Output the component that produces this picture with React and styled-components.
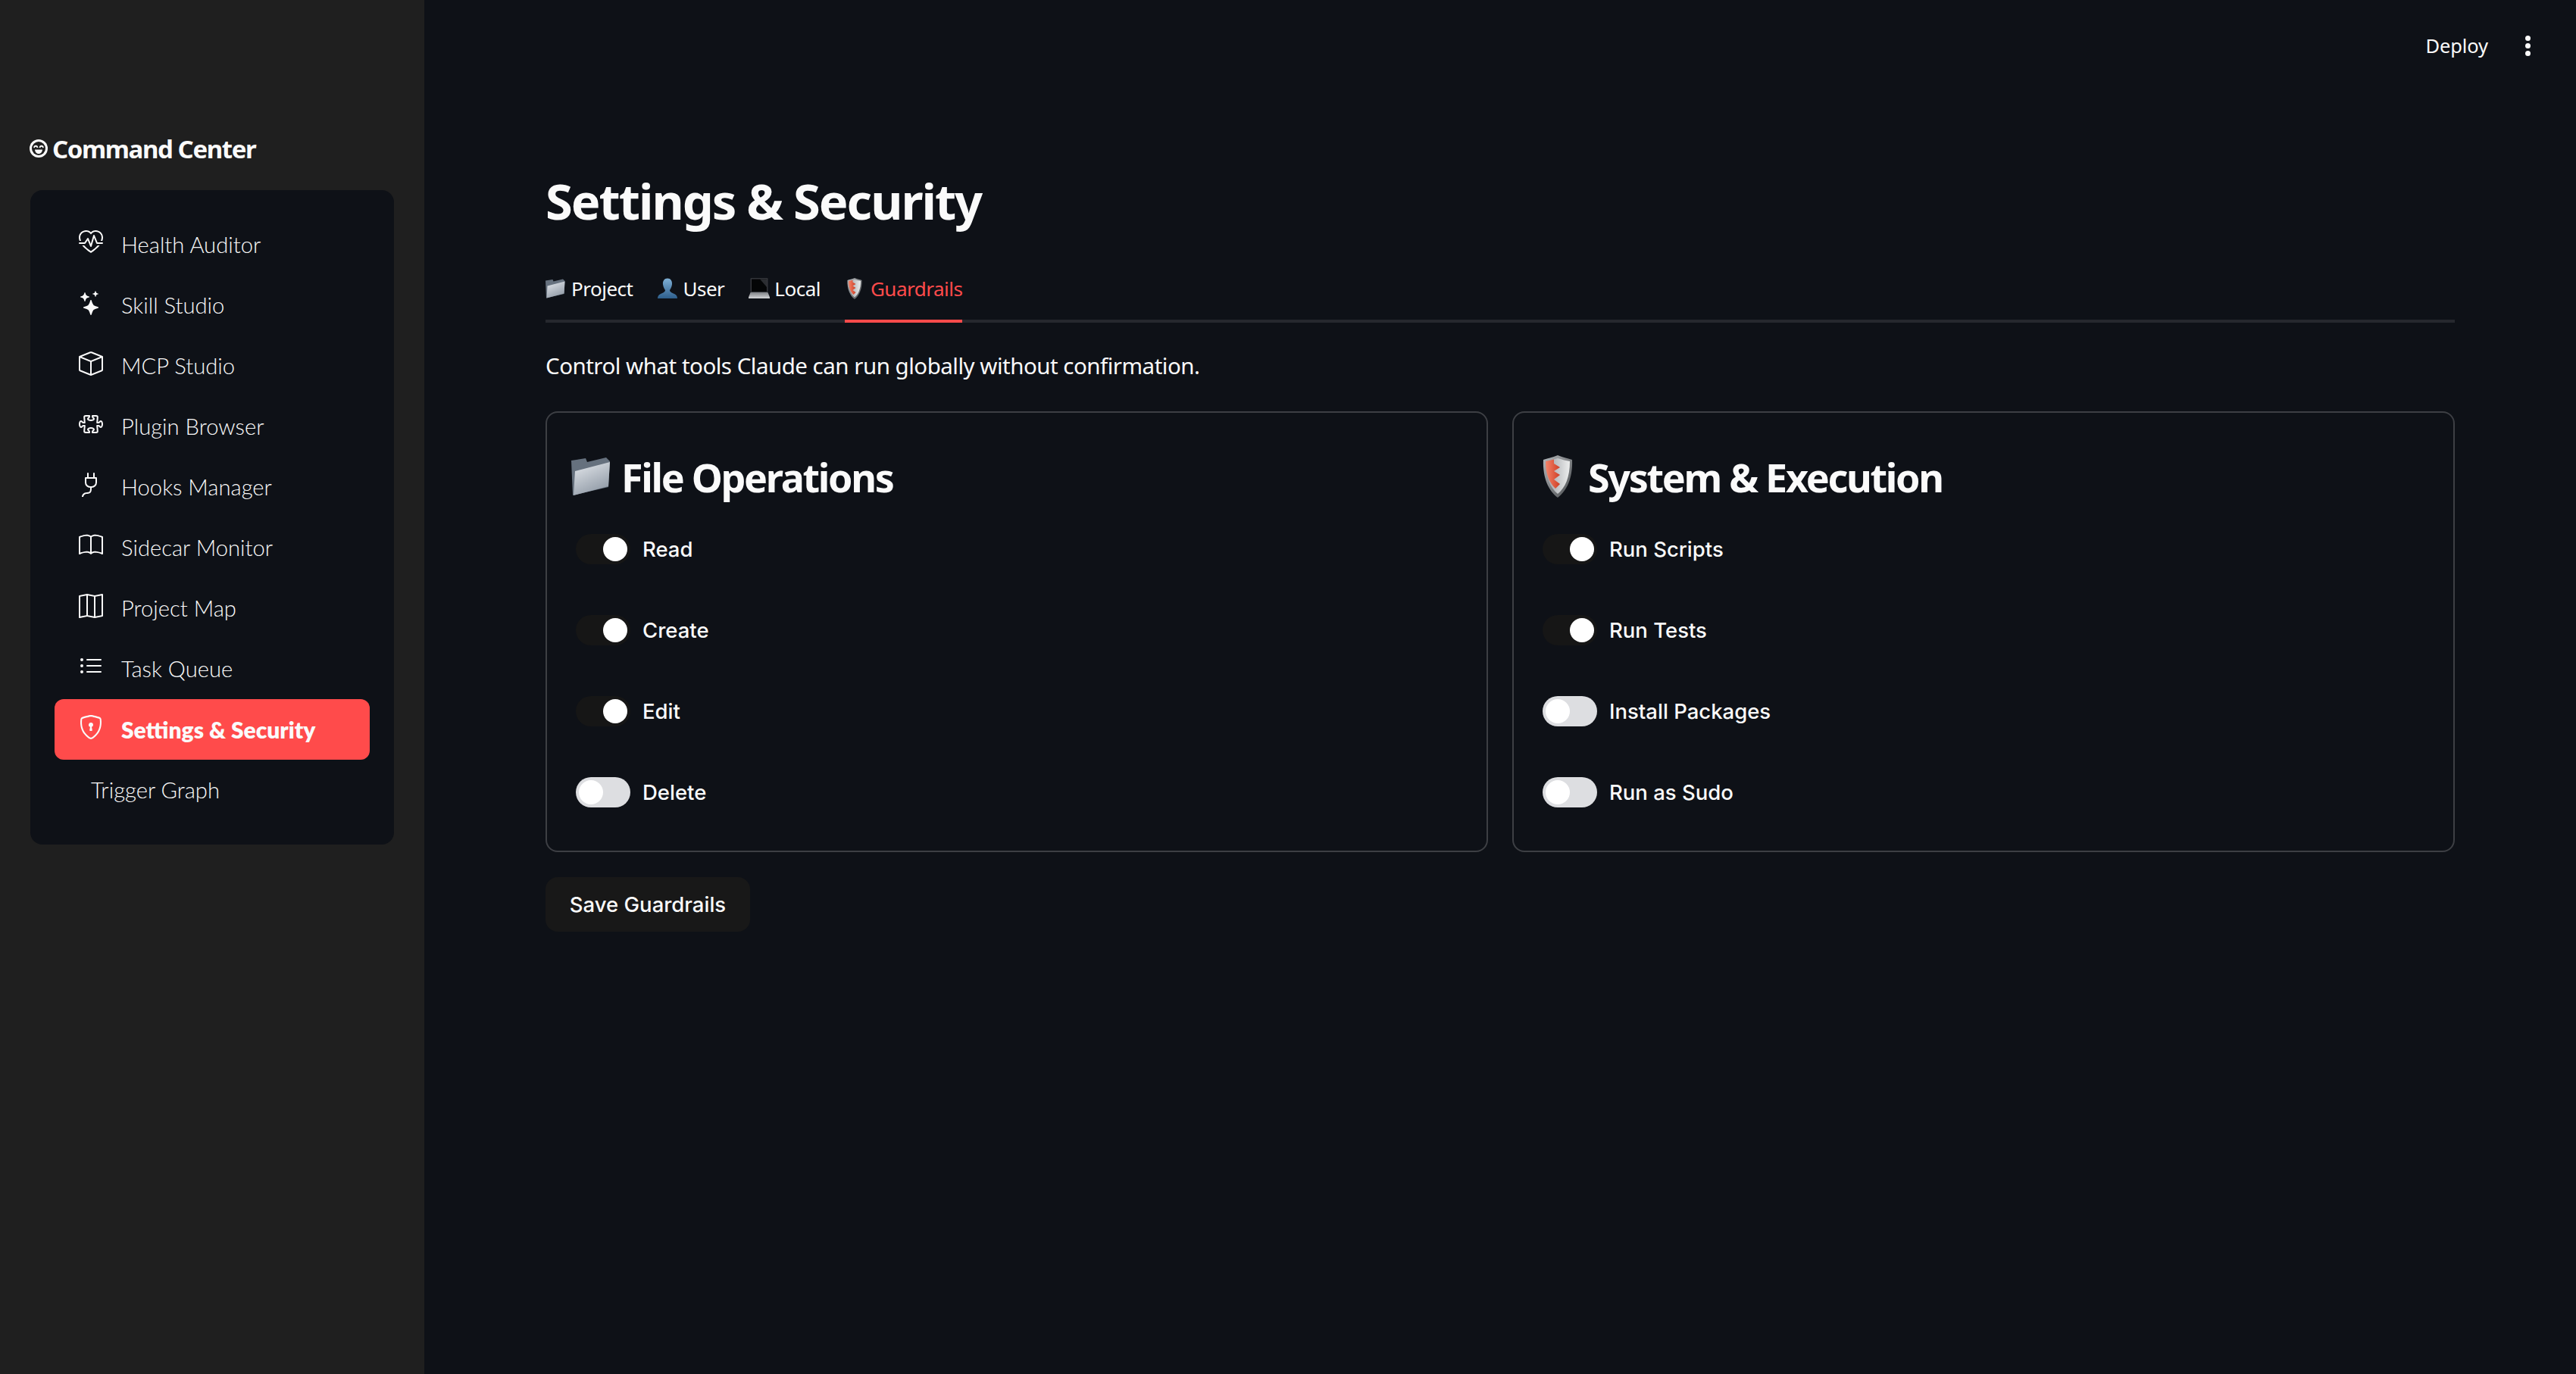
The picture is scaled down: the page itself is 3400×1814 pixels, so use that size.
import React from 'react';
import styled, { createGlobalStyle } from 'styled-components';
import {
  BsHeartPulse,
  BsStars,
  BsBox,
  BsPuzzle,
  BsPlug,
  BsBook,
  BsMap,
  BsListUl,
  BsShieldLock,
} from 'react-icons/bs';

const GlobalStyle = createGlobalStyle`
  html, body {
    margin: 0;
    padding: 0;
    background: #0e1117;
    color: #fafafa;
  }
  * {
    box-sizing: border-box;
  }
`;

const HEADING_FONT = '"Noto Sans", "Open Sans", sans-serif';
const WIDGET_FONT = 'Inter, "Liberation Sans", sans-serif';
const NAV_FONT = 'Lato, "Open Sans", sans-serif';

const Shell = styled.div`
  display: flex;
  width: 100%;
  min-height: 1814px;
`;

const Sidebar = styled.aside`
  width: 560px;
  flex-shrink: 0;
  background: #1f1f1f;
  padding: 170px 40px 0;
`;

const Brand = styled.h2`
  display: flex;
  align-items: center;
  gap: 5px;
  margin: 0 0 25px -2px;
  height: 54px;
  padding-bottom: 2px;
  font-family: ${HEADING_FONT};
  font-size: 33px;
  font-weight: 700;
  letter-spacing: -1.4px;
  color: #fafafa;
`;

const NavBox = styled.nav`
  display: flex;
  flex-direction: column;
  margin-top: 27px;
  background: #0e1117;
  border-radius: 16px;
  padding: 32px;
`;

const NavRow = styled.div`
  display: flex;
  align-items: center;
  height: 80px;
  padding-left: 32px;
  padding-bottom: 1px;
  border-radius: 12px;
  font-family: ${NAV_FONT};
  font-size: ${({ $active }) => ($active ? '30px' : '29.2px')};
  font-weight: ${({ $active }) => ($active ? 800 : 300)};
  color: #fafafa;
  background: ${({ $active }) => ($active ? '#ff4b4b' : 'transparent')};
`;

const NavIcon = styled.span`
  display: flex;
  width: ${({ $blank }) => ($blank ? '16px' : '32px')};
  margin-right: ${({ $blank }) => ($blank ? '0' : '24px')};
  margin-top: -6px;
  font-size: 32px;
`;

const Main = styled.main`
  flex: 1;
  min-width: 0;
  display: flex;
  flex-direction: column;
`;

const TopBar = styled.header`
  display: flex;
  align-items: center;
  justify-content: flex-end;
  height: 120px;
  padding-right: 60px;
`;

const DeployLabel = styled.span`
  font-family: ${HEADING_FONT};
  font-size: 25.5px;
  letter-spacing: -0.1px;
  color: #fafafa;
  margin-right: 49px;
`;

const MenuDots = styled.span`
  display: flex;
  flex-direction: column;
  gap: 3px;
`;

const Dot = styled.i`
  display: block;
  width: 7px;
  height: 7px;
  border-radius: 50%;
  background: #fafafa;
`;

const Content = styled.section`
  padding: 95px 160px 0;
`;

const PageTitle = styled.h1`
  margin: 0 0 25px;
  height: 100px;
  line-height: 100px;
  font-family: ${HEADING_FONT};
  font-size: 65px;
  font-weight: 700;
  letter-spacing: -2px;
  color: #fafafa;
`;

const TabList = styled.div`
  display: flex;
  gap: 32px;
  height: 86px;
  border-bottom: 4px solid #26282e;
`;

const Tab = styled.div`
  display: flex;
  align-items: center;
  gap: 6px;
  height: 86px;
  border-bottom: 4px solid ${({ $active }) => ($active ? '#ff4b4b' : 'transparent')};
  font-family: ${HEADING_FONT};
  font-size: 26px;
  letter-spacing: -0.5px;
  color: ${({ $active }) => ($active ? '#ff4b4b' : '#fafafa')};
`;

const Intro = styled.p`
  margin: 33px 0 36px;
  height: 48px;
  line-height: 48px;
  font-family: ${HEADING_FONT};
  font-size: 29.5px;
  letter-spacing: -0.5px;
  color: #fafafa;
`;

const CardGrid = styled.div`
  display: grid;
  grid-template-columns: 1fr 1fr;
  gap: 32px;
`;

const Card = styled.div`
  height: 582px;
  border: 2px solid #3d3f44;
  border-radius: 16px;
  padding: 50px 32px 0;
`;

const CardTitle = styled.h3`
  display: flex;
  align-items: center;
  gap: 10px;
  height: 68px;
  margin: 0 0 42px;
  font-family: ${HEADING_FONT};
  font-size: 52px;
  font-weight: 700;
  letter-spacing: -2.3px;
  color: #fafafa;
`;

const ToggleList = styled.div`
  display: flex;
  flex-direction: column;
  gap: 67px;
  padding-left: 6px;
`;

const ToggleRow = styled.label`
  display: flex;
  align-items: center;
  gap: 16px;
  height: 40px;
  font-family: ${WIDGET_FONT};
  font-size: 27.5px;
  font-weight: 500;
  color: #fafafa;
`;

const Track = styled.span`
  display: flex;
  justify-content: ${({ $on }) => ($on ? 'flex-end' : 'flex-start')};
  align-items: center;
  width: 72px;
  height: 40px;
  padding: 0 4px;
  border-radius: 20px;
  background: ${({ $on }) => ($on ? '#161616' : '#dddee1')};
`;

const Knob = styled.span`
  width: 32px;
  height: 32px;
  border-radius: 50%;
  background: #ffffff;
`;

const SaveButton = styled.button`
  display: block;
  width: 270px;
  height: 72px;
  margin-top: 33px;
  padding: 0;
  border: none;
  border-radius: 16px;
  background: #181818;
  font-family: ${WIDGET_FONT};
  font-size: 27.5px;
  font-weight: 500;
  color: #fafafa;
`;

const EmojiSvg = styled.svg`
  display: block;
  flex-shrink: 0;
  width: ${({ $size }) => $size}px;
  height: ${({ $size }) => $size}px;
`;

const LogoSvg = styled.svg`
  display: block;
  width: 26px;
  height: 26px;
`;

const FolderEmoji = ({ size }) => (
  <EmojiSvg $size={size} viewBox="0 0 56 56">
    <defs>
      <linearGradient id="folderFront" x1="0.2" y1="0" x2="0.7" y2="1">
        <stop offset="0" stopColor="#dfe3e8" />
        <stop offset="1" stopColor="#8d97a3" />
      </linearGradient>
    </defs>
    <path d="M0 7 L19 4 L21 9 L46 3 L51 8 L49 42 L2 53 Z" fill="#66717e" />
    <path d="M5 21 L51 9 L49 41 L3 53 Z" fill="url(#folderFront)" />
  </EmojiSvg>
);

const ShieldEmoji = ({ size }) => (
  <EmojiSvg $size={size} viewBox="0 0 56 56">
    <defs>
      <linearGradient id="shieldRim" x1="0" y1="0" x2="1" y2="1">
        <stop offset="0" stopColor="#b5b8bb" />
        <stop offset="1" stopColor="#4a4d50" />
      </linearGradient>
      <linearGradient id="shieldSilver" x1="0" y1="0" x2="1" y2="0">
        <stop offset="0" stopColor="#9a9ea3" />
        <stop offset="1" stopColor="#eceded" />
      </linearGradient>
      <linearGradient id="shieldRed" x1="0" y1="0" x2="1" y2="0">
        <stop offset="0" stopColor="#f4846a" />
        <stop offset="1" stopColor="#cf3f26" />
      </linearGradient>
    </defs>
    <path d="M26 0 C33 3 40 4 45 6 C46 30 38 47 26 56 C14 47 6 30 7 6 C12 4 19 3 26 0 Z" fill="url(#shieldRim)" />
    <path d="M26 4 C32 6 37 7 42 8 C42 29 36 43 26 51 C16 43 10 29 10 8 C15 7 20 6 26 4 Z" fill="url(#shieldSilver)" />
    <path d="M15 7 L21 5.5 L21 11 L29 16 L21 21 L29 26 L21 32 L29 38 L23 44 C15 36 10 26 10 8 Z" fill="url(#shieldRed)" />
  </EmojiSvg>
);

const PersonEmoji = ({ size }) => (
  <EmojiSvg $size={size} viewBox="0 0 56 56">
    <defs>
      <linearGradient id="personFill" x1="0" y1="0" x2="0" y2="1">
        <stop offset="0" stopColor="#7fb0d6" />
        <stop offset="1" stopColor="#2e5f8c" />
      </linearGradient>
    </defs>
    <path
      d="M28 1 C36 1 41 8 40 17 C39 24 36 29 34 32 C34 37 40 39 46 42 C51 44 54 48 54 54 L2 54 C2 48 5 44 10 42 C16 39 22 37 22 32 C20 29 17 24 16 17 C15 8 20 1 28 1 Z"
      fill="url(#personFill)"
    />
  </EmojiSvg>
);

const LaptopEmoji = ({ size }) => (
  <EmojiSvg $size={size} viewBox="0 0 56 56">
    <defs>
      <linearGradient id="laptopBase" x1="0" y1="0" x2="0" y2="1">
        <stop offset="0" stopColor="#7e8185" />
        <stop offset="1" stopColor="#d4d6d8" />
      </linearGradient>
    </defs>
    <rect x="5" y="0" width="46" height="38" rx="2" fill="#33353a" />
    <rect x="8" y="3" width="40" height="33" fill="#040506" />
    <path d="M30 3 L48 3 L48 24 Z" fill="#2b2d31" />
    <path d="M5 38 L51 38 L56 51 L56 54 L0 54 L0 51 Z" fill="url(#laptopBase)" />
  </EmojiSvg>
);

const BrandLogo = () => (
  <LogoSvg viewBox="0 0 26 26">
    <circle cx="13" cy="13" r="12" fill="#fafafa" />
    <circle cx="13" cy="13" r="9" fill="#1f1f1f" />
    <path d="M7 12 C7.5 9 11 9 11.5 12 M14.5 12 C15 9 18.5 9 19 12" fill="none" stroke="#fafafa" strokeWidth="1.8" />
    <path d="M8 14.5 L18 14.5 C17.5 18.5 15.5 20 13 20 C10.5 20 8.5 18.5 8 14.5 Z" fill="#fafafa" />
  </LogoSvg>
);

const navItems = [
  { label: 'Health Auditor', Icon: BsHeartPulse },
  { label: 'Skill Studio', Icon: BsStars },
  { label: 'MCP Studio', Icon: BsBox },
  { label: 'Plugin Browser', Icon: BsPuzzle },
  { label: 'Hooks Manager', Icon: BsPlug },
  { label: 'Sidecar Monitor', Icon: BsBook },
  { label: 'Project Map', Icon: BsMap },
  { label: 'Task Queue', Icon: BsListUl },
  { label: 'Settings & Security', Icon: BsShieldLock, active: true },
  { label: 'Trigger Graph' },
];

const tabs = [
  { label: 'Project', Emoji: FolderEmoji },
  { label: 'User', Emoji: PersonEmoji },
  { label: 'Local', Emoji: LaptopEmoji },
  { label: 'Guardrails', Emoji: ShieldEmoji, active: true },
];

const cards = [
  {
    title: 'File Operations',
    Emoji: FolderEmoji,
    toggles: [
      { label: 'Read', on: true },
      { label: 'Create', on: true },
      { label: 'Edit', on: true },
      { label: 'Delete', on: false },
    ],
  },
  {
    title: 'System & Execution',
    Emoji: ShieldEmoji,
    toggles: [
      { label: 'Run Scripts', on: true },
      { label: 'Run Tests', on: true },
      { label: 'Install Packages', on: false },
      { label: 'Run as Sudo', on: false },
    ],
  },
];

const App = () => {
  return (
    <>
      <GlobalStyle />
      <Shell>
        <Sidebar>
          <Brand>
            <BrandLogo />
            Command Center
          </Brand>
          <NavBox>
            {navItems.map(({ label, Icon, active }) => (
              <NavRow key={label} $active={active}>
                <NavIcon $blank={!Icon}>{Icon && <Icon />}</NavIcon>
                {label}
              </NavRow>
            ))}
          </NavBox>
        </Sidebar>
        <Main>
          <TopBar>
            <DeployLabel>Deploy</DeployLabel>
            <MenuDots>
              <Dot />
              <Dot />
              <Dot />
            </MenuDots>
          </TopBar>
          <Content>
            <PageTitle>Settings &amp; Security</PageTitle>
            <TabList>
              {tabs.map(({ label, Emoji, active }) => (
                <Tab key={label} $active={active}>
                  <Emoji size={28} />
                  {label}
                </Tab>
              ))}
            </TabList>
            <Intro>Control what tools Claude can run globally without confirmation.</Intro>
            <CardGrid>
              {cards.map(({ title, Emoji, toggles }) => (
                <Card key={title}>
                  <CardTitle>
                    <Emoji size={56} />
                    {title}
                  </CardTitle>
                  <ToggleList>
                    {toggles.map(({ label, on }) => (
                      <ToggleRow key={label}>
                        <Track $on={on}>
                          <Knob />
                        </Track>
                        {label}
                      </ToggleRow>
                    ))}
                  </ToggleList>
                </Card>
              ))}
            </CardGrid>
            <SaveButton>Save Guardrails</SaveButton>
          </Content>
        </Main>
      </Shell>
    </>
  );
};

export default App;
